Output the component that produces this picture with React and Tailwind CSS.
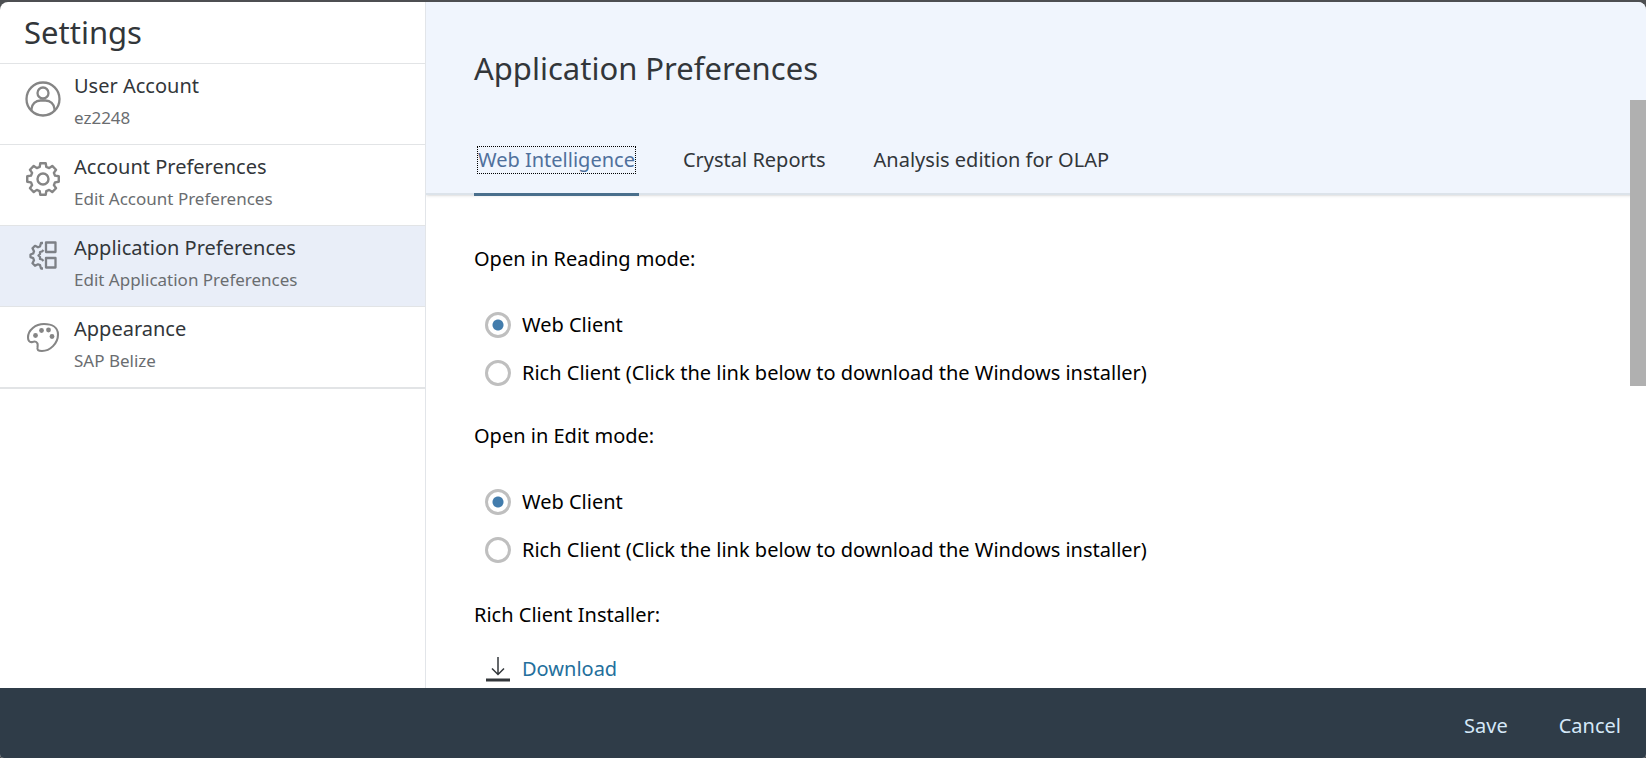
import React, { useState } from 'react';

const sections = [
  { id: 'user', title: 'User Account', subtitle: 'ez2248', icon: UserIcon },
  { id: 'account', title: 'Account Preferences', subtitle: 'Edit Account Preferences', icon: GearIcon },
  { id: 'application', title: 'Application Preferences', subtitle: 'Edit Application Preferences', icon: AppIcon },
  { id: 'appearance', title: 'Appearance', subtitle: 'SAP Belize', icon: PaletteIcon },
];

const tabs = ['Web Intelligence', 'Crystal Reports', 'Analysis edition for OLAP'];

const clients = [
  { value: 'web', label: 'Web Client' },
  { value: 'rich', label: 'Rich Client (Click the link below to download the Windows installer)' },
];

// outline of an eight-toothed gear around (cx, cy)
function gearPath(cx, cy, outer, inner) {
  const points = [];
  for (let i = 0; i < 8; i++) {
    const base = (i * Math.PI) / 4 - Math.PI / 2;
    [[-0.27, inner], [-0.17, outer], [0.17, outer], [0.27, inner]].forEach(([a, r]) => {
      points.push(`${(cx + r * Math.cos(base + a)).toFixed(2)} ${(cy + r * Math.sin(base + a)).toFixed(2)}`);
    });
  }
  return `M${points.join('L')}Z`;
}

function UserIcon() {
  return (
    <svg width="36" height="36" viewBox="0 0 36 36" fill="none" stroke="#858585" strokeWidth="2.300">
      <circle cx="18" cy="18" r="16.500" />
      <circle cx="18" cy="12" r="5.500" />
      <path d="M6.500 29.500v-1.500a9 9 0 0 1 9-8.500h5a9 9 0 0 1 9 8.500v1.500" />
    </svg>
  );
}

function GearIcon() {
  return (
    <svg width="36" height="36" viewBox="0 1 36 36" fill="none" stroke="#858585" strokeWidth="2.400" strokeLinejoin="round">
      <path d={gearPath(18, 18, 16, 12.5)} />
      <circle cx="18" cy="18" r="5.500" />
    </svg>
  );
}

function AppIcon() {
  return (
    <svg width="36" height="36" viewBox="0 6 36 36" fill="none" stroke="#7d8086" strokeWidth="2.300" strokeLinejoin="round" className="overflow-visible">
      <path d="M18 6h-2l-1 3.500-2 .800-3-1.500-2.500 2.500 1.500 3-.8 2.200-2.700 1v2.600l2.700 1 .8 2.200-1.500 3 2.500 2.500 3-1.500 2 .8 1 3.400h2" />
      <path d="M18.500 13l-1.500 1.500-2 .500v2l-1.500 1.500 1.500 1.500v2l2 .500 1.500 1.500" />
      <path d="M21 5.500h9.500v9.500h-9.500zM21 21h9.500v9.500h-9.500z" />
    </svg>
  );
}

function PaletteIcon() {
  return (
    <svg width="36" height="36" viewBox="0 5 36 36" fill="none" stroke="#858585" strokeWidth="2.100" strokeLinejoin="round" className="overflow-visible">
      <path d="M12.500 24.500c-1-2-2.500-2.500-5-1.500-3 .8-4.500-1.500-4.500-4.500C3 11 10.500 5 19 5c8 0 14 3.500 14 10.500 0 9-8 16.500-16 16.500-4 0-5-1-4.500-3.500.2-1.500.3-3 0-4z" />
      <g fill="#858585" stroke="none">
        <circle cx="10.500" cy="16.500" r="2.400" />
        <circle cx="16.500" cy="11.500" r="2.400" />
        <circle cx="23.500" cy="11" r="2.400" />
        <circle cx="27" cy="17.500" r="2.400" />
      </g>
    </svg>
  );
}

function DownloadIcon() {
  return (
    <svg width="24" height="26" viewBox="0 0 24 26" fill="none" stroke="#33373b">
      <path d="M12 1v17M6 12.500l6 6 6-6" strokeWidth="1.500" />
      <path d="M0 24h24" strokeWidth="3" />
    </svg>
  );
}

function SideItem({ item, selected, onSelect }) {
  const Icon = item.icon;
  return (
    <li className="border-b border-[#e2e4e6] last:border-b-2">
      <button
        type="button"
        onClick={onSelect}
        className={`flex h-20 w-full gap-[13px] pl-[25px] text-left ${selected ? 'bg-[#e9eef8]' : 'bg-white'}`}
      >
        <span className="pt-[17px]">
          <Icon />
        </span>
        <span className="block pt-[7px]">
          <span className="block leading-[30px] text-[#32363a]">{item.title}</span>
          <span className="block text-[17px] leading-[33px] text-[#6a6d70]">{item.subtitle}</span>
        </span>
      </button>
    </li>
  );
}

function ClientChoice({ legend, name }) {
  const [value, setValue] = useState('web');
  return (
    <fieldset>
      <legend className="leading-6">{legend}</legend>
      <div className="pt-[30px] pl-[11px]">
        {clients.map((client) => (
          <label key={client.value} className="flex h-12 items-center gap-[11px]">
            <input
              type="radio"
              name={name}
              value={client.value}
              checked={value === client.value}
              onChange={() => setValue(client.value)}
              className="size-[26px] appearance-none rounded-full border-3 border-[#bfbfbf] bg-white checked:bg-[radial-gradient(circle,#427cac_5px,#ffffff_6px)]"
            />
            {client.label}
          </label>
        ))}
      </div>
    </fieldset>
  );
}

export default function App() {
  const [section, setSection] = useState('application');
  const [tab, setTab] = useState(tabs[0]);

  return (
    <div className="flex h-screen flex-col bg-[#4d4f52] pt-[2px] font-['Noto_Sans',sans-serif] text-[20px] text-black">
      <div className="flex min-h-0 flex-1 flex-col overflow-hidden rounded-t-lg rounded-b-sm bg-white">
        <div className="flex min-h-0 flex-1">
          <aside className="w-[426px] shrink-0 border-r border-[#e2e5e9]">
            <h1 className="border-b border-[#e2e4e6] pl-6 text-[31px] leading-[61px] text-[#32363a]">Settings</h1>
            <ul>
              {sections.map((item) => (
                <SideItem
                  key={item.id}
                  item={item}
                  selected={item.id === section}
                  onSelect={() => setSection(item.id)}
                />
              ))}
            </ul>
          </aside>

          <main className="relative min-w-0 flex-1 overflow-hidden">
            <header className="border-b-2 border-[#dce3ea] bg-[#f0f5fd] px-12 pt-[46px] shadow-sm">
              <h2 className="text-[31px] leading-10 text-[#32363a]">Application Preferences</h2>
              <nav className="-mb-[3px] flex gap-10 pt-[59px]">
                {tabs.map((name) => (
                  <button
                    key={name}
                    type="button"
                    onClick={() => setTab(name)}
                    className={`h-[49px] border-b-3 px-1 pb-5 ${
                      name === tab ? 'border-[#4a6f8c] text-[#4f709c]' : 'border-transparent text-[#32363a]'
                    }`}
                  >
                    <span className={`block leading-[26px] ${name === tab ? 'outline-1 outline-dotted outline-black' : ''}`}>
                      {name}
                    </span>
                  </button>
                ))}
              </nav>
            </header>

            <div className="flex flex-col gap-[27px] px-12 pt-[52px]">
              <ClientChoice legend="Open in Reading mode:" name="reading-mode" />
              <ClientChoice legend="Open in Edit mode:" name="edit-mode" />
              <div>
                <p className="leading-7">Rich Client Installer:</p>
                <a href="#download" className="flex items-center gap-3 pt-[26px] pl-3 leading-7 text-[#246f9c]">
                  <DownloadIcon />
                  Download
                </a>
              </div>
            </div>

            <div className="absolute top-[98px] right-0 h-[286px] w-4 bg-[#b0b0b0]" />
          </main>
        </div>

        <footer className="flex h-[70px] shrink-0 items-center justify-end gap-[51px] bg-[#2f3c48] pt-[6px] pr-[25px] text-[#d5e8f8]">
          <button type="button">Save</button>
          <button type="button">Cancel</button>
        </footer>
      </div>
    </div>
  );
}
